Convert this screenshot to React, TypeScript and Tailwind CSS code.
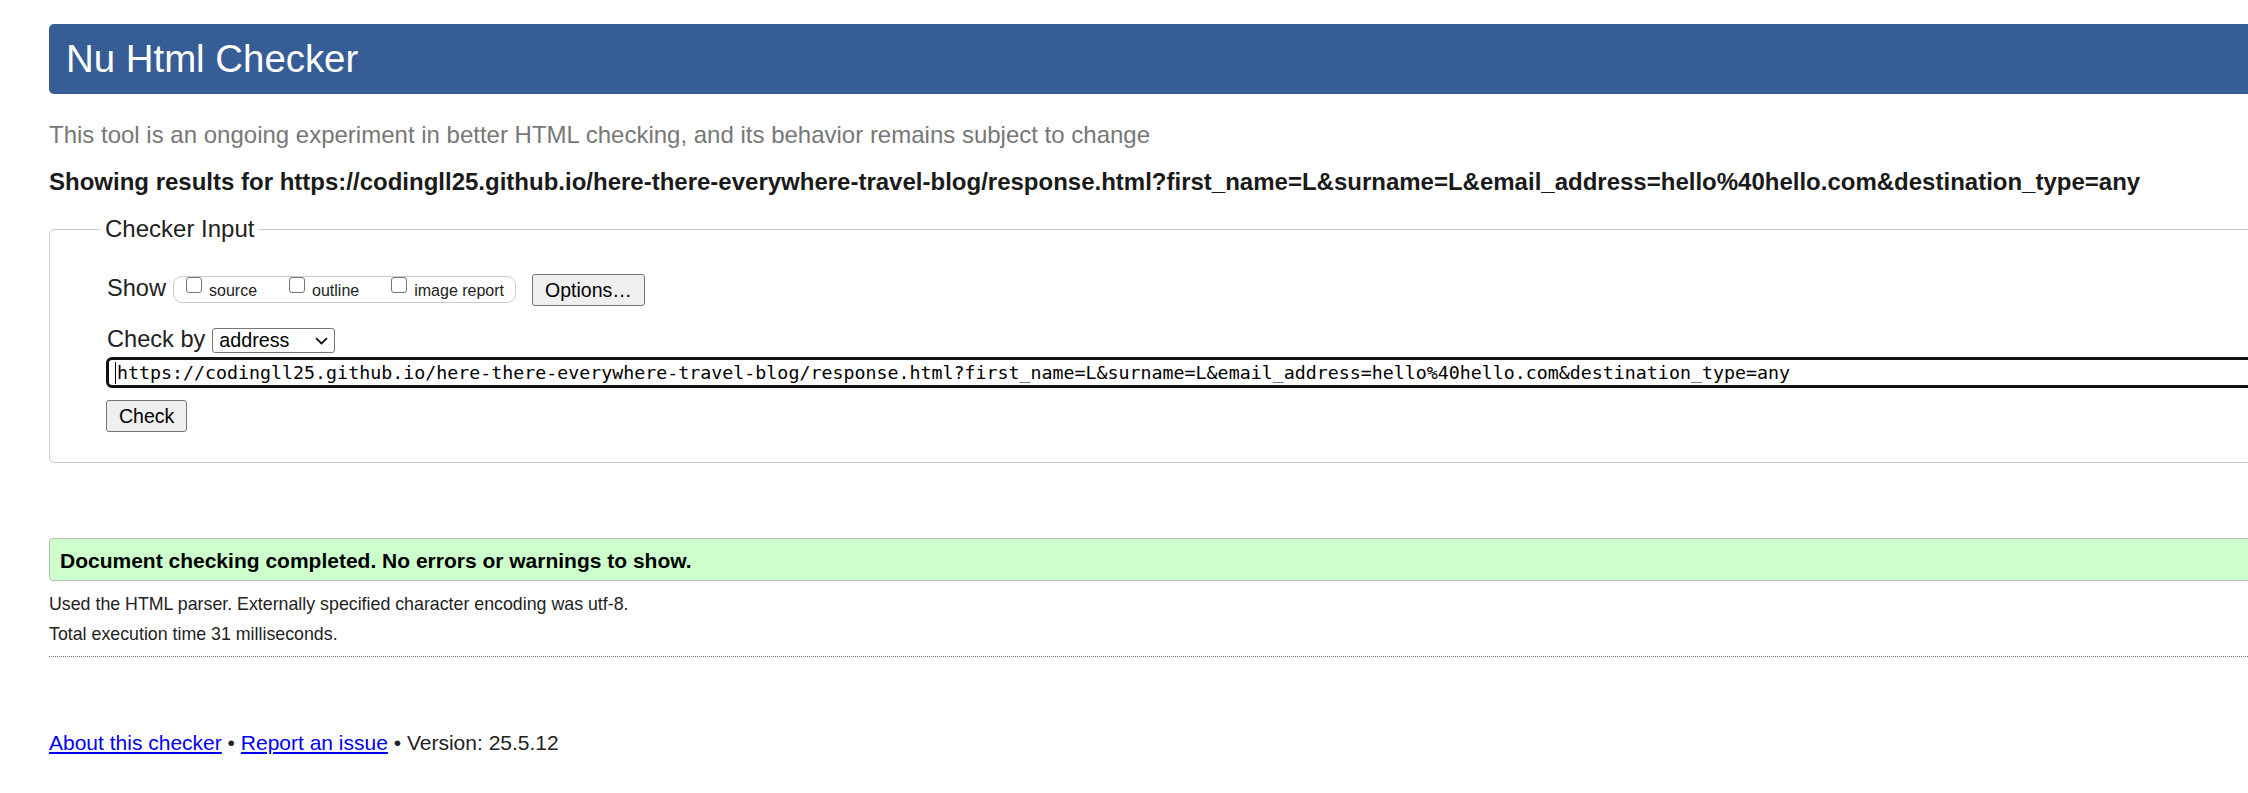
const targetUrl =
  "https://codingll25.github.io/here-there-everywhere-travel-blog/response.html?first_name=L&surname=L&email_address=hello%40hello.com&destination_type=any";

function Box() {
  return (
    <span className="block size-[16px] shrink-0 rounded-[3px] border border-[#767676] bg-white" />
  );
}

function ShowOption({ label }: { label: string }) {
  return (
    <label className="flex items-start gap-[7px]">
      <Box />
      <span className="mt-[1px] text-[16px] leading-[25px]">{label}</span>
    </label>
  );
}

export default function App() {
  return (
    <div className="w-full overflow-hidden bg-white font-['Liberation_Sans',Arial,sans-serif] text-[#222]">
      <div className="w-[2500px] pb-[30px] pl-[49px] pt-[24px]">
        <header className="flex h-[70px] items-center rounded-[5px] bg-[#365d95] pl-[17px]">
          <h1 className="text-[38.4px] leading-none text-white">Nu Html Checker</h1>
        </header>

        <p className="mt-[26px] text-[24px] leading-[30px] text-[#777]">
          This tool is an ongoing experiment in better HTML checking, and its behavior remains subject to change
        </p>
        <p className="mt-[17px] text-[24px] font-bold leading-[30px] text-[#1a1a1a]">
          Showing results for {targetUrl}
        </p>

        <fieldset className="mt-[18px] rounded-[5px] border border-[#ccc] pb-[30px] pl-[47px] pt-[31px]">
          <legend className="ml-[3px] px-[5px] text-[24px] leading-[28px]">Checker Input</legend>
          <div className="pl-[10px]">
            <div className="flex items-start">
              <span className="text-[23.6px] leading-[28px]">Show</span>
              <div className="ml-[7px] mt-[2px] flex h-[27px] items-start gap-[32px] rounded-[9px] border border-[#ccc] pl-[12px] pr-[11px]">
                <ShowOption label="source" />
                <ShowOption label="outline" />
                <ShowOption label="image report" />
              </div>
              <button className="ml-[16px] h-[32px] rounded-[3px] border border-[#767676] bg-[#efefef] px-[12px] text-[19.5px] leading-[28px] text-black">
                Options…
              </button>
            </div>

            <div className="mt-[19px] flex items-start">
              <span className="text-[23.6px] leading-[28px]">Check by</span>
              <div className="ml-[7px] mt-[3px] flex h-[25px] w-[123px] items-center justify-between rounded-[3px] border border-[#767676] pl-[6px] pr-[6px] text-[19.7px] leading-[23px] text-black">
                <span>address</span>
                <svg width="13" height="8" viewBox="0 0 13 8" fill="none">
                  <path d="M1 1.2 6.5 6.5 12 1.2" stroke="#111" strokeWidth="1.8" />
                </svg>
              </div>
            </div>

            <div className="-ml-[1px] mt-[4px] flex h-[31px] items-center rounded-[6px] border-[3px] border-[#111] pl-[6px]">
              <span className="mr-[1px] h-[22px] w-[1px] bg-black" />
              <span className="font-['DejaVu_Sans_Mono',monospace] text-[18.3px] leading-[24px] text-black">
                {targetUrl}
              </span>
            </div>

            <button className="-ml-[1px] mt-[12px] h-[32px] rounded-[3px] border border-[#767676] bg-[#efefef] px-[12px] text-[19.5px] leading-[28px] text-black">
              Check
            </button>
          </div>
        </fieldset>

        <div className="mt-[75px] rounded-[4px] border border-[#bbb] bg-[#ccffcc] pb-[4px] pl-[10px] pt-[7px]">
          <p className="text-[21px] font-bold leading-[30px] text-black">
            Document checking completed. No errors or warnings to show.
          </p>
        </div>

        <p className="mt-[11px] text-[17.8px] leading-[24px]">
          Used the HTML parser. Externally specified character encoding was utf-8.
        </p>
        <p className="mt-[6px] text-[17.8px] leading-[24px]">Total execution time 31 milliseconds.</p>

        <hr className="mt-[10px] border-t border-dotted border-[#777]" />

        <p className="mt-[72px] text-[21px] leading-[28px]">
          <a href="#" className="text-[#0000ee] underline">About this checker</a>
          {" • "}
          <a href="#" className="text-[#0000ee] underline">Report an issue</a>
          {" • Version: 25.5.12"}
        </p>
      </div>
    </div>
  );
}
